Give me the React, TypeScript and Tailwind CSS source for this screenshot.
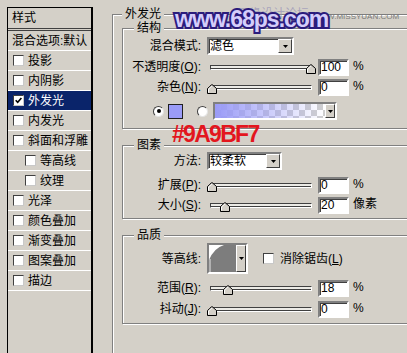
import React from 'react';

type Item = { label: string; on?: boolean; sub?: boolean };

const items: Item[] = [
  { label: '投影' },
  { label: '内阴影' },
  { label: '外发光', on: true },
  { label: '内发光' },
  { label: '斜面和浮雕' },
  { label: '等高线', sub: true },
  { label: '纹理', sub: true },
  { label: '光泽' },
  { label: '颜色叠加' },
  { label: '渐变叠加' },
  { label: '图案叠加' },
  { label: '描边' },
];

const sunken =
  'border-2 border-t-[#808080] border-l-[#808080] border-b-white border-r-white shadow-[inset_1px_1px_0_#404040]';

function CheckBox({ checked }: { checked?: boolean }) {
  return (
    <span className="w-[11px] h-[11px] shrink-0 bg-white border border-t-[#404040] border-l-[#404040] border-b-[#c8c8c8] border-r-[#c8c8c8] flex items-center justify-center">
      {checked && (
        <svg width="7" height="7" viewBox="0 0 7 7">
          <path d="M0.7 3.2 L2.7 5.3 L6.4 1" stroke="#000" strokeWidth="1.6" fill="none" />
        </svg>
      )}
    </span>
  );
}

function Radio({ on }: { on?: boolean }) {
  return (
    <span className="w-[11px] h-[11px] shrink-0 rounded-full bg-white border border-t-[#404040] border-l-[#404040] border-b-[#e4e4e4] border-r-[#e4e4e4] flex items-center justify-center">
      {on && <span className="w-[4px] h-[4px] rounded-full bg-black" />}
    </span>
  );
}

function DropBtn({ w }: { w: string }) {
  return (
    <span
      className={`${w} h-full shrink-0 bg-[#d4d0c8] border border-t-white border-l-white border-b-[#404040] border-r-[#404040] flex items-center justify-center`}
    >
      <svg width="5" height="3" viewBox="0 0 5 3">
        <polygon points="0,0 5,0 2.5,3" fill="#000" />
      </svg>
    </span>
  );
}

function Group({
  title,
  titleLeft,
  className,
  children,
}: {
  title: string;
  titleLeft: string;
  className: string;
  children: React.ReactNode;
}) {
  return (
    <div className={`relative shrink-0 border border-[#808080] shadow-[inset_1px_1px_0_#fff,1px_1px_0_#fff] ${className}`}>
      <span className={`absolute -top-[8px] ${titleLeft} px-[3px] bg-[#d4d0c8] leading-[14px]`}>{title}</span>
      {children}
    </div>
  );
}

function Row({
  label,
  h = 'h-[18px]',
  className = '',
  children,
}: {
  label: React.ReactNode;
  h?: string;
  className?: string;
  children: React.ReactNode;
}) {
  return (
    <div className={`flex items-center ${h} ${className}`}>
      <div className="w-[78px] shrink-0 text-right leading-[14px] whitespace-nowrap">{label}</div>
      <div className="ml-[6px] flex items-center h-full">{children}</div>
    </div>
  );
}

function Key({ k }: { k: string }) {
  return (
    <>
      (<span className="underline">{k}</span>)
    </>
  );
}

function Slider({ thumb, value, unit = '%' }: { thumb: number; value: string; unit?: string }) {
  return (
    <>
      <div className="relative w-[108px] h-[18px] flex items-center pl-[3px]">
        <div className="w-[102px] h-[5px] border border-t-[#404040] border-l-[#404040] border-b-white border-r-white bg-[#ecebe6] shadow-[inset_0_-1px_0_#404040]" />
        <svg className="absolute top-[6px]" style={{ left: thumb }} width="10" height="10" viewBox="0 0 10 10">
          <polygon points="0.5,9.5 0.5,4.5 5,0.5 9.5,4.5 9.5,9.5" fill="#d4d0c8" stroke="#000" />
          <polyline points="1.5,8.5 1.5,5 5,1.8" fill="none" stroke="#fff" />
        </svg>
      </div>
      <div className={`ml-[3px] w-[31px] h-[17px] bg-white ${sunken} text-[12px] leading-[13px] pl-[1px]`}>{value}</div>
      <span className="ml-[4px] leading-[14px] -mt-[2px]">{unit}</span>
    </>
  );
}

export default function App() {
  return (
    <div className="relative w-[407px] h-[353px] overflow-hidden bg-[#d4d0c8] text-black text-[12px] font-['Liberation_Sans','Noto_Sans_CJK_SC',sans-serif] flex pl-[7px] pt-[7px]">
      {/* style list */}
      <div className="w-[86px] h-[346px] shrink-0 border-l border-t border-r-2 border-[#000] flex flex-col">
        <div className="h-[23px] shrink-0 border-b-[3px] border-double border-[#404040] pl-[4px] flex items-center leading-[14px]">
          样式
        </div>
        <div className="h-[20px] shrink-0 border-b border-white pl-[4px] flex items-center leading-[14px] whitespace-nowrap">
          混合选项:默认
        </div>
        {items.map((it) => (
          <div
            key={it.label}
            className={`h-[20px] shrink-0 border-b border-white flex items-center gap-[4px] leading-[14px] whitespace-nowrap ${
              it.sub ? 'pl-[17px]' : 'pl-[5px]'
            } ${it.on ? 'bg-[#0a246a] text-white' : ''}`}
          >
            <CheckBox checked={it.on} />
            <span>{it.label}</span>
          </div>
        ))}
      </div>

      {/* outer glow settings */}
      <Group title="外发光" titleLeft="left-[9px]" className="ml-[19px] mt-[7px] w-[330px] h-[360px] pl-[9px] pt-[13px] flex flex-col">
        <Group title="结构" titleLeft="left-[11px]" className="w-[300px] h-[101px] pt-[8px]">
          <Row label="混合模式:">
            <div className={`flex items-center w-[87px] h-[18px] bg-white ${sunken} pl-[1px]`}>
              <span className="flex-1 leading-[14px]">滤色</span>
              <DropBtn w="w-[14px]" />
            </div>
          </Row>
          <Row label={<>不透明度<Key k="O" />:</>} className="mt-[3px]">
            <Slider thumb={99} value="100" />
          </Row>
          <Row label={<>杂色<Key k="N" />:</>} className="mt-[2px]">
            <Slider thumb={0} value="0" />
          </Row>
          <div className="flex items-center h-[18px] mt-[6px] pl-[30px]">
            <Radio on />
            <span className="ml-[4px] w-[15px] h-[15px] bg-[#9a9bf7] border border-[#202020]" />
            <span className="ml-[14px]">
              <Radio />
            </span>
            <div className={`ml-[5px] w-[124px] h-[18px] flex ${sunken}`}>
              <div className="flex-1 [background-image:linear-gradient(to_right,#9a9bf7,rgba(154,155,247,0)),repeating-conic-gradient(#cfcfcf_0_25%,#fff_0_50%)] [background-size:100%_100%,12px_12px]" />
              <DropBtn w="w-[10px]" />
            </div>
          </div>
        </Group>

        <Group title="图素" titleLeft="left-[11px]" className="mt-[16px] w-[300px] h-[74px] pt-[6px]">
          <Row label="方法:">
            <div className={`flex items-center w-[75px] h-[18px] bg-white ${sunken} pl-[1px]`}>
              <span className="flex-1 leading-[14px]">较柔软</span>
              <DropBtn w="w-[14px]" />
            </div>
          </Row>
          <Row label={<>扩展<Key k="P" />:</>} className="mt-[6px]">
            <Slider thumb={0} value="0" />
          </Row>
          <Row label={<>大小<Key k="S" />:</>} className="mt-[2px]">
            <Slider thumb={13} value="20" unit="像素" />
          </Row>
        </Group>

        <Group title="品质" titleLeft="left-[11px]" className="mt-[16px] w-[300px] h-[89px] pt-[7px]">
          <Row label="等高线:" h="h-[31px]">
            <div className={`flex w-[41px] h-[31px] ${sunken}`}>
              <svg className="flex-1 h-full" viewBox="0 0 27 27" preserveAspectRatio="none">
                <rect x="0" y="0" width="27" height="27" fill="#7d7d7d" />
                <path d="M0 0 H15 Q5 3 0 15 Z" fill="#fff" />
                <line x1="1" y1="14" x2="1" y2="27" stroke="#e8e8e8" strokeWidth="1" />
              </svg>
              <DropBtn w="w-[10px]" />
            </div>
            <span className="ml-[15px]">
              <CheckBox />
            </span>
            <span className="ml-[6px] leading-[14px] whitespace-nowrap">
              消除锯齿<Key k="L" />
            </span>
          </Row>
          <Row label={<>范围<Key k="R" />:</>} className="mt-[5px]">
            <Slider thumb={16} value="18" />
          </Row>
          <Row label={<>抖动<Key k="J" />:</>} className="mt-[3px]">
            <Slider thumb={0} value="0" />
          </Row>
        </Group>
      </Group>

      {/* overlays: colour note and watermark */}
      <span className="absolute left-[172px] top-[123px] text-[23px] leading-none font-bold tracking-[-1.7px] text-[#e3161e]">
        #9A9BF7
      </span>
      <span className="absolute left-[237px] top-[7px] text-[12px] leading-[14px] text-[#9c98b8]/80 whitespace-nowrap">
        思缘设计论坛
      </span>
      <span className="absolute left-[312px] top-[12px] text-[8px] leading-[9px] text-[#7a7a7a] whitespace-nowrap">
        WWW.MISSYUAN.COM
      </span>
      <span className="absolute left-[175px] top-[8px] text-[23px] leading-none font-bold tracking-[-1px] text-[#d4cdfa] [-webkit-text-stroke:4px_#2b1c7c] [paint-order:stroke_fill] whitespace-nowrap">
        www.68ps.com
      </span>
    </div>
  );
}
